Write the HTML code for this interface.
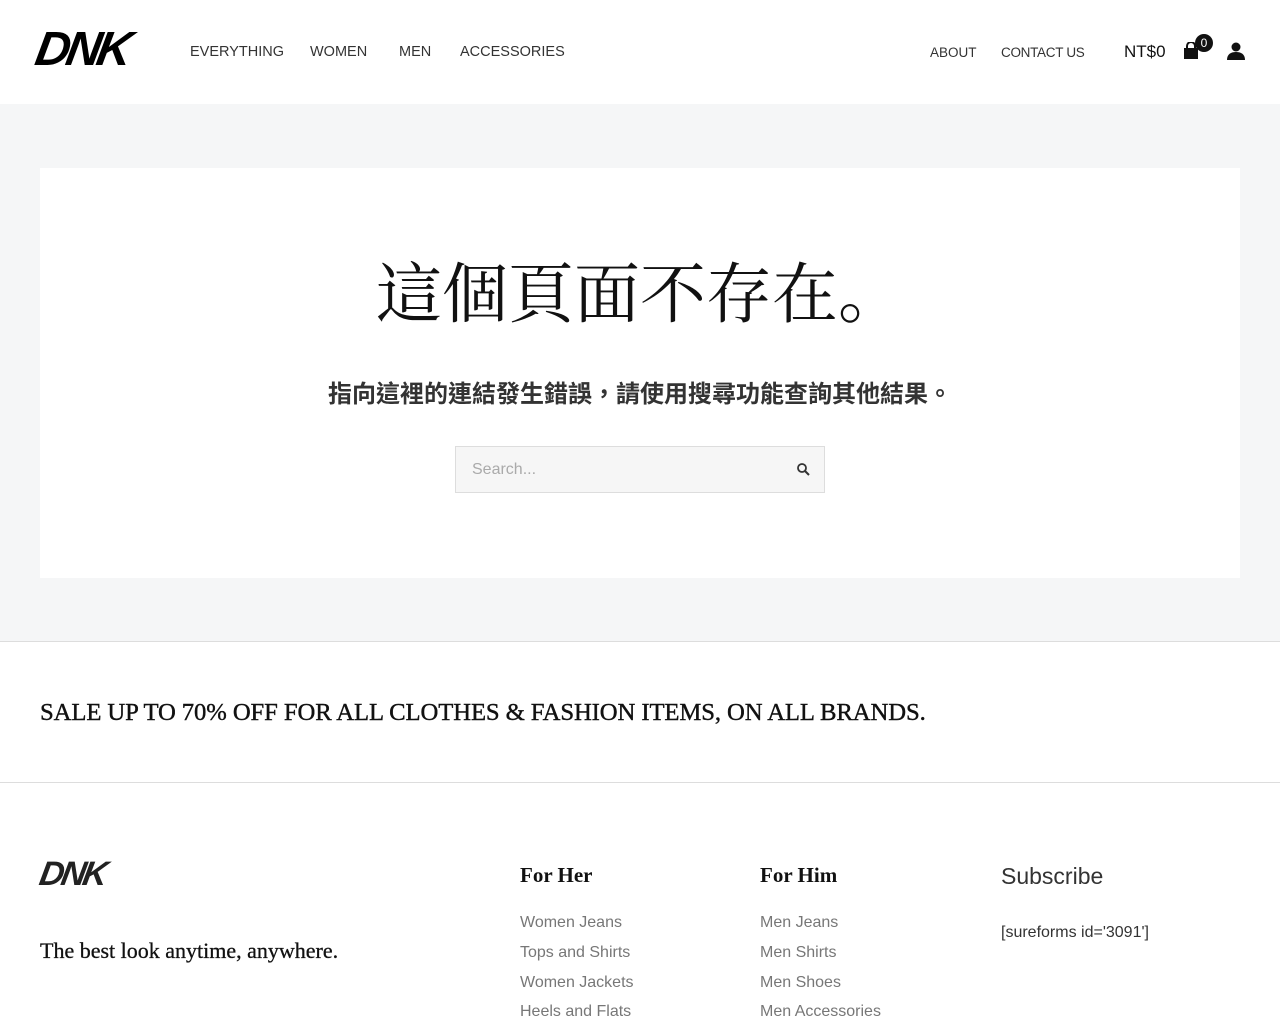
<!DOCTYPE html>
<html><head><meta charset="utf-8"><style>
*{margin:0;padding:0;box-sizing:border-box}
body{width:1280px;height:1024px;overflow:hidden;background:#fff;font-family:"Liberation Sans","Noto Sans CJK TC",sans-serif;color:#222}
.hdr{height:104px;position:relative;background:#fff}
.logo{position:absolute;left:36px;top:27px;font:italic 900 48px/46px "Liberation Sans",sans-serif;letter-spacing:-4px;transform:skewX(-10deg);transform-origin:left;color:#000}
.nav{position:absolute;top:44px;font-size:14.5px;color:#333}
.nav span{position:absolute;white-space:nowrap}
.main{background:#f5f6f7;height:538px;position:relative;border-bottom:1px solid #ddd}
.card{position:absolute;left:40px;top:64px;width:1200px;height:410px;background:#fff}
h1{position:absolute;top:88px;width:100%;text-align:center;font:400 66px/80px "Liberation Serif","Noto Serif CJK SC",serif;color:#111}
.sub{position:absolute;top:206px;width:100%;text-align:center;font-size:24px;font-weight:700;color:#333;font-family:"Liberation Sans","Noto Sans CJK TC",sans-serif}
.search{position:absolute;left:415px;top:278px;width:370px;height:47px;border:1px solid #ddd;background:#f6f6f6;font-size:16px;color:#aaa;padding:14px 16px}
.sale{height:141px;border-bottom:1px solid #ddd;position:relative}
.sale div{position:absolute;left:40px;top:56px;font:400 24.7px/30px "Liberation Serif",serif;color:#111;-webkit-text-stroke:0.4px #111;letter-spacing:-0.1px}
.foot{position:relative}
.foot .l{position:absolute;font-size:16px;color:#777}
.foot h3{position:absolute;font:700 21px/26px "Liberation Serif",serif;color:#111}
</style></head><body>
<div class="hdr">
<div class="logo">DNK</div>
<div class="nav">
<span style="left:190px">EVERYTHING</span><span style="left:310px">WOMEN</span><span style="left:399px">MEN</span><span style="left:460px">ACCESSORIES</span>
<span style="left:930px;font-size:13.5px;top:1px">ABOUT</span><span style="left:1001px;font-size:13.5px;top:1px;letter-spacing:-0.3px">CONTACT US</span>
<span style="left:1124px;font-size:17px;top:-2px;color:#111">NT$0</span>
</div>
<svg style="position:absolute;left:1183px;top:42px" width="16" height="17" viewBox="0 0 16 17"><path d="M4 6V4a4 4 0 018 0v2" stroke="#111" stroke-width="2" fill="none"/><rect x="1" y="6" width="14" height="11" fill="#111"/></svg>
<div style="position:absolute;left:1195px;top:34px;width:18px;height:18px;border-radius:50%;background:#111;color:#fff;font-size:12px;text-align:center;line-height:18px">0</div>
<svg style="position:absolute;left:1227px;top:42px" width="18" height="18" viewBox="0 0 18 18"><circle cx="9" cy="5" r="4.5" fill="#111"/><path d="M0 18c0-6 4-8 9-8s9 2 9 8z" fill="#111"/></svg>
</div>
<div class="main"><div class="card">
<h1>這個頁面不存在。</h1>
<div class="sub">指向這裡的連結發生錯誤，請使用搜尋功能查詢其他結果。</div>
<div class="search">Search...<svg style="position:absolute;right:14px;top:16px" width="13" height="13" viewBox="0 0 13 13"><circle cx="5" cy="5" r="4" stroke="#333" stroke-width="1.8" fill="none"/><path d="M8 8l4 4" stroke="#333" stroke-width="2"/></svg></div>
</div></div>
<div class="sale"><div>SALE UP TO 70% OFF FOR ALL CLOTHES &amp; FASHION ITEMS, ON ALL BRANDS.</div></div>
<div class="foot">
<div style="position:absolute;left:40px;top:74px;font:italic 900 34px/34px 'Liberation Sans',sans-serif;letter-spacing:-3px;transform:skewX(-10deg);transform-origin:left">DNK</div>
<div style="position:absolute;left:40px;top:154px;font:400 22px/28px 'Liberation Serif',serif;color:#111;-webkit-text-stroke:0.3px #111">The best look anytime, anywhere.</div>
<h3 style="left:520px;top:79px">For Her</h3><h3 style="left:760px;top:79px">For Him</h3>
<div style="position:absolute;left:1001px;top:80px;font-size:23px;color:#333">Subscribe</div>
<div class="l" style="left:520px;top:131px">Women Jeans</div><div class="l" style="left:520px;top:161px">Tops and Shirts</div><div class="l" style="left:520px;top:191px">Women Jackets</div><div class="l" style="left:520px;top:220px">Heels and Flats</div>
<div class="l" style="left:760px;top:131px">Men Jeans</div><div class="l" style="left:760px;top:161px">Men Shirts</div><div class="l" style="left:760px;top:191px">Men Shoes</div><div class="l" style="left:760px;top:220px">Men Accessories</div>
<div class="l" style="left:1001px;top:141px;color:#333">[sureforms id='3091']</div>
</div>
</body></html>
